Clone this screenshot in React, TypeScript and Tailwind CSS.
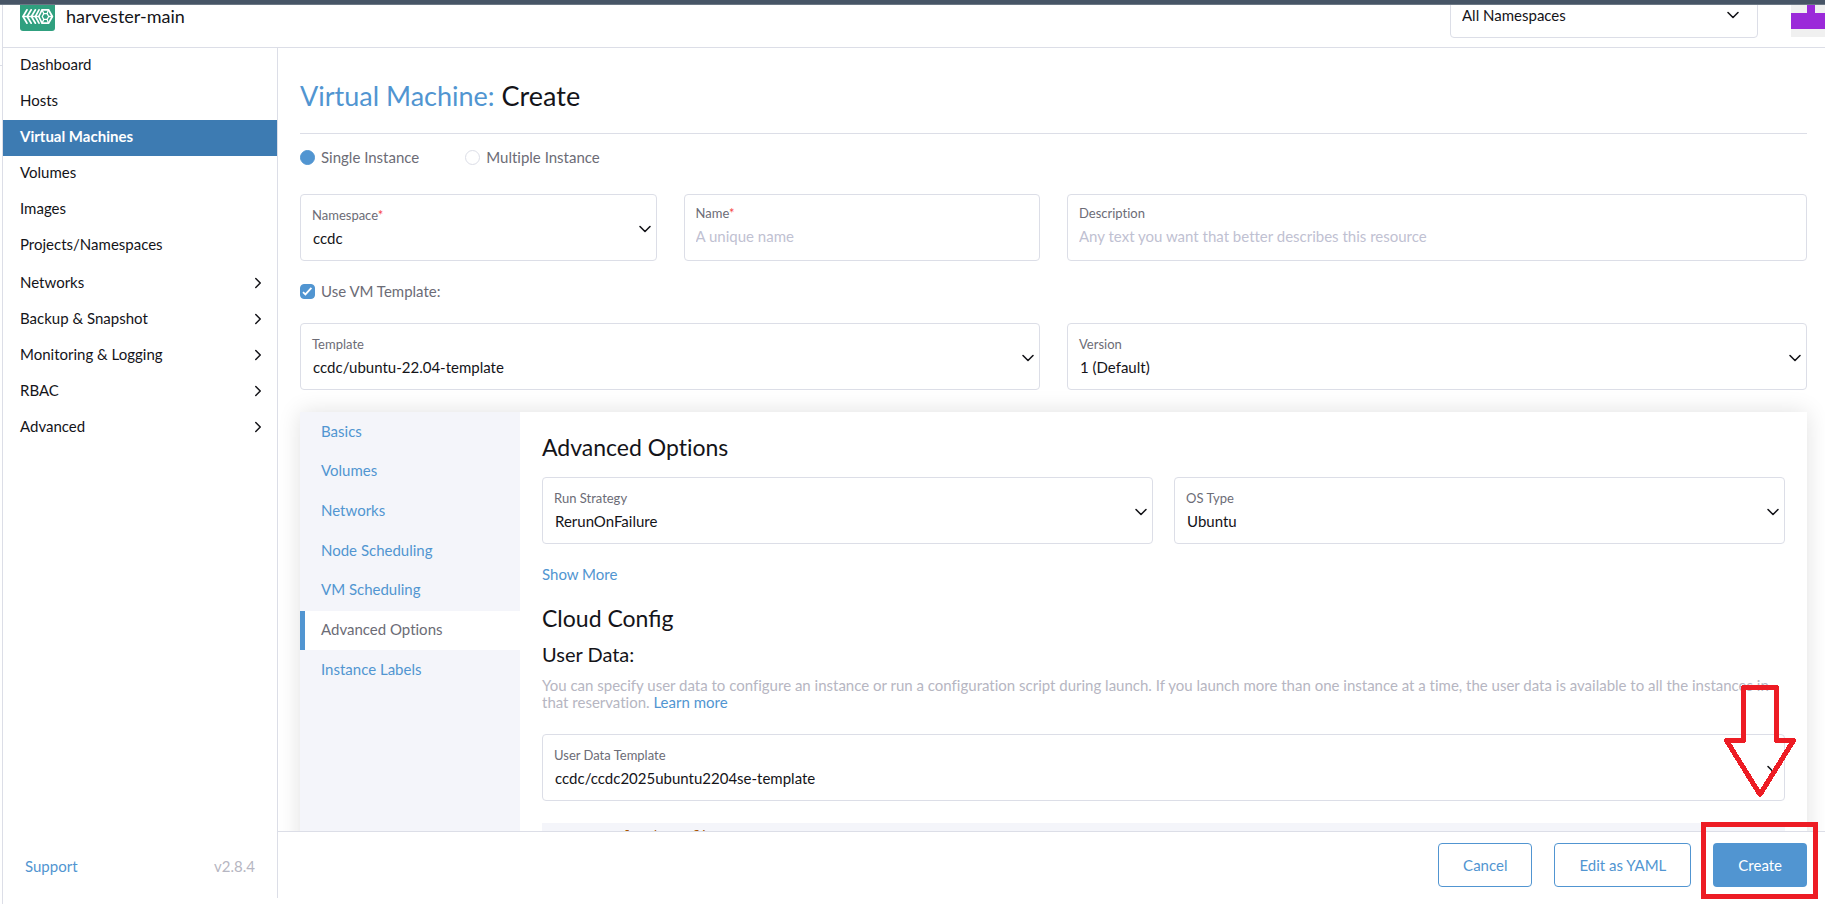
import { useId, type ReactNode } from "react";
import { ChevronDown, ChevronRight } from "lucide-react";
import clsx from "clsx";

const pages = ["Dashboard", "Hosts", "Virtual Machines", "Volumes", "Images", "Projects/Namespaces"];
const groups = ["Networks", "Backup & Snapshot", "Monitoring & Logging", "RBAC", "Advanced"];
const tabs = [
  "Basics",
  "Volumes",
  "Networks",
  "Node Scheduling",
  "VM Scheduling",
  "Advanced Options",
  "Instance Labels",
];

function Logo() {
  return (
    <svg viewBox="0 0 35 35" className="size-[35px]" aria-hidden="true">
      <rect width="35" height="35" rx="3" fill="#30a07f" />
      <g fill="none" stroke="#fff" strokeWidth="1.7" strokeLinejoin="round" strokeLinecap="round">
        <path d="M7 13.8 3 20.5l4 6.7M11.2 13.8l-4 6.7 4 6.7M15.4 13.8l-4 6.7 4 6.7M19 13.8l-3.6 6.7 3.6 6.7" />
        <path d="M22 13.8h6.5l3.9 6.7-3.9 6.7H22l-3.2-6.7z" />
        <path
          strokeWidth="1.3"
          d="M3 20.5h15.8M23.8 17.6h3.3l1.6 2.9-1.6 2.9h-3.3l-1.6-2.9zM22 13.8l1.8 3.8M28.5 13.8l-1.4 3.8M32.4 20.5h-3.7M28.5 27.2l-1.4-3.8M22 27.2l1.8-3.8"
        />
      </g>
    </svg>
  );
}

function Label({ id, text, required }: { id: string; text: string; required?: boolean }) {
  return (
    <label htmlFor={id} className="block text-[13px] leading-[18px] text-[#6c6c76]">
      {text}
      {required && <span className="text-[#f64747]">*</span>}
    </label>
  );
}

function SelectField({ label, value, required }: { label: string; value: string; required?: boolean }) {
  const id = useId();
  return (
    <div className="relative h-[67px] rounded-[4px] border border-[#dcdee7] px-[11px] pt-[11px]">
      <Label id={id} text={label} required={required} />
      <select
        id={id}
        defaultValue={value}
        className="mt-[2px] block h-6 w-full appearance-none bg-transparent pl-px text-[15px] outline-none"
      >
        <option>{value}</option>
      </select>
      <ChevronDown className="pointer-events-none absolute top-6 right-px size-5" strokeWidth={1.9} />
    </div>
  );
}

function TextField({
  label,
  placeholder,
  required,
  className,
}: {
  label: string;
  placeholder: string;
  required?: boolean;
  className?: string;
}) {
  const id = useId();
  return (
    <div className={clsx("h-[67px] rounded-[4px] border border-[#dcdee7] px-[11px] pt-[9px]", className)}>
      <Label id={id} text={label} required={required} />
      <input
        id={id}
        type="text"
        placeholder={placeholder}
        className="mt-[2px] block h-6 w-full bg-transparent text-[15px] outline-none placeholder:text-[#bfc1d2]"
      />
    </div>
  );
}

function Radio({ label, checked }: { label: string; checked?: boolean }) {
  return (
    <label className="flex h-5 items-center gap-[6px] text-[#6c6c76]">
      <input
        type="radio"
        name="instance"
        defaultChecked={checked}
        className="size-[15px] appearance-none rounded-full border border-[#dcdee7] checked:border-[#5195d1] checked:bg-[#5195d1]"
      />
      {label}
    </label>
  );
}

function OutlineButton({ children }: { children: ReactNode }) {
  return (
    <button type="button" className="h-11 rounded-[4px] border border-[#5195d1] px-6 text-[#5195d1]">
      {children}
    </button>
  );
}

function Sidebar() {
  return (
    <nav className="mb-[6px] flex w-[275px] shrink-0 flex-col border-r border-[#dcdee7]">
      <ul>
        {pages.map((p) => {
          const active = p === "Virtual Machines";
          return (
            <li key={p}>
              <a
                href="#"
                className={clsx(
                  "flex h-9 items-center pb-[3px] pl-[17px]",
                  active && "bg-[#3d7bb2] font-bold text-white",
                )}
              >
                {p}
              </a>
            </li>
          );
        })}
      </ul>
      <ul className="mt-px">
        {groups.map((g) => (
          <li key={g}>
            <button
              type="button"
              className="flex h-9 w-full items-center justify-between pr-[10px] pb-px pl-[17px]"
            >
              {g}
              <ChevronRight className="size-[18px]" strokeWidth={2} />
            </button>
          </li>
        ))}
      </ul>
      <div className="mt-auto mb-[22px] flex justify-between pr-[22px] pl-[22px] leading-5">
        <a href="#" className="text-[#5195d1]">
          Support
        </a>
        <span className="text-[#b6b6c2]">v2.8.4</span>
      </div>
    </nav>
  );
}

function AdvancedOptions() {
  return (
    <section className="min-w-0 flex-1 px-[22px] pt-[21px]">
      <h2 className="text-[23px] leading-7">Advanced Options</h2>
      <div className="mt-4 grid grid-cols-2 gap-[21px]">
        <SelectField label="Run Strategy" value="RerunOnFailure" />
        <SelectField label="OS Type" value="Ubuntu" />
      </div>
      <a href="#" className="mt-5 block w-fit leading-5 text-[#5195d1]">
        Show More
      </a>
      <h2 className="mt-5 text-[23px] leading-7 [font-variant-ligatures:normal]">Cloud Config</h2>
      <h3 className="mt-[10px] text-[20px] leading-6">User Data:</h3>
      <p className="mt-[11px] leading-[17px] text-[#b6b6c2]">
        You can specify user data to configure an instance or run a configuration script during launch. If you launch
        more than one instance at a time, the user data is available to all the instances in
        <br />
        that reservation.{" "}
        <a href="#" className="text-[#5195d1]">
          Learn more
        </a>
      </p>
      <div className="mt-[23px]">
        <SelectField label="User Data Template" value="ccdc/ccdc2025ubuntu2204se-template" />
      </div>
      <div className="mt-[22px] flex h-[200px] gap-2 bg-[#f4f5fa] pt-1 font-['Liberation_Mono',monospace] text-[14px] leading-5">
        <span className="w-[57px] text-right text-[#999999]">1</span>
        <code className="font-['Liberation_Mono',monospace] text-[#aa5500]">#cloud-config</code>
      </div>
    </section>
  );
}

export default function App() {
  return (
    <div className="flex h-screen flex-col overflow-hidden bg-white font-['Lato',sans-serif] text-[15px] text-[#141419] [font-variant-ligatures:no-common-ligatures]">
      <div className="z-10 h-[5px] shrink-0 border-b border-[#6c7885] bg-[#475566]" />
      <div className="flex min-h-0 flex-1">
        <div className="w-[3px] shrink-0 border-r border-[#dcdee7] pt-[60px]">
          <div className="h-px bg-[#dcdee7]" />
        </div>
        <div className="flex min-w-0 flex-1 flex-col">
          <header className="flex h-[43px] shrink-0 items-end border-b border-[#dcdee7] pl-[17px]">
            <div className="mb-4 flex items-end gap-[11px]">
              <Logo />
              <span className="mb-[3px] text-[18px] leading-6">harvester-main</span>
            </div>
            <div className="relative mb-[9px] ml-auto h-[46px] w-[308px] shrink-0 rounded-[4px] border border-[#dcdee7]">
              <select
                aria-label="Namespaces"
                className="h-full w-full appearance-none bg-transparent pl-[11px] text-[15px] outline-none"
              >
                <option>All Namespaces</option>
              </select>
              <ChevronDown className="pointer-events-none absolute top-3 right-[14px] size-5" strokeWidth={1.9} />
            </div>
            <svg
              viewBox="0 0 34 32"
              className="mb-[10px] ml-[33px] h-8 w-[34px] shrink-0"
              aria-hidden="true"
              shapeRendering="crispEdges"
            >
              <path d="M0 0h34v32H0z" fill="#f0f0f0" />
              <path d="M16 0h8v8h10v16H0V8h16z" fill="#9b29d9" />
            </svg>
          </header>
          <div className="flex min-h-0 flex-1">
            <Sidebar />
            <div className="flex min-w-0 flex-1 flex-col">
              <main className="min-h-0 flex-1 overflow-hidden pr-[18px] pl-[22px]">
                <h1 className="mt-[30px] border-b border-[#dcdee7] pb-[19px] text-[27px] leading-9">
                  <a href="#" className="text-[#5195d1]">
                    Virtual Machine:
                  </a>{" "}
                  Create
                </h1>
                <div className="mt-[13px] flex gap-[46px]">
                  <Radio label="Single Instance" checked />
                  <Radio label="Multiple Instance" />
                </div>
                <div className="mt-[27px] grid grid-cols-4 gap-[27px]">
                  <SelectField label="Namespace" value="ccdc" required />
                  <TextField label="Name" placeholder="A unique name" required />
                  <TextField
                    label="Description"
                    placeholder="Any text you want that better describes this resource"
                    className="col-span-2"
                  />
                </div>
                <label className="mt-5 flex h-5 w-fit items-center gap-[6px] text-[#6c6c76]">
                  <span className="relative size-[15px]">
                    <input
                      type="checkbox"
                      defaultChecked
                      className="block size-[15px] appearance-none rounded-[4px] border border-[#dcdee7] checked:border-[#5195d1] checked:bg-[#5195d1]"
                    />
                    <svg viewBox="0 0 15 15" className="pointer-events-none absolute inset-0" aria-hidden="true">
                      <path d="M3 8.2 5.4 10.4 11.4 3.8" fill="none" stroke="#fff" strokeWidth="1.8" />
                    </svg>
                  </span>
                  Use VM Template:
                </label>
                <div className="mt-[22px] grid grid-cols-2 gap-[27px]">
                  <SelectField label="Template" value="ccdc/ubuntu-22.04-template" />
                  <SelectField label="Version" value="1 (Default)" />
                </div>
                <div className="mt-[22px] flex bg-white shadow-[0_0_22px_rgba(0,0,20,0.12)]">
                  <div className="w-[220px] shrink-0 bg-[#f4f5fa]">
                    <ul className="flex h-[278px] flex-col">
                      {tabs.map((t) => {
                        const active = t === "Advanced Options";
                        return (
                          <li key={t} className="flex flex-1">
                            <a
                              href="#"
                              className={clsx(
                                "flex flex-1 items-center border-l-[5px] pb-[2px] pl-4",
                                active
                                  ? "border-[#5195d1] bg-white text-[#6c6c76]"
                                  : "border-transparent text-[#5195d1]",
                              )}
                            >
                              {t}
                            </a>
                          </li>
                        );
                      })}
                    </ul>
                  </div>
                  <AdvancedOptions />
                </div>
              </main>
              <footer className="flex h-[73px] shrink-0 justify-end gap-[22px] border-t border-[#dcdee7] pt-[11px] pr-[18px]">
                <OutlineButton>Cancel</OutlineButton>
                <OutlineButton>Edit as YAML</OutlineButton>
                <div className="relative h-11">
                  <button type="button" className="h-11 rounded-[4px] bg-[#5195d1] px-[25px] text-white">
                    Create
                  </button>
                  <div className="pointer-events-none absolute -top-[21px] -right-[11px] -bottom-3 -left-3 border-5 border-[#ed1c24]" />
                  <svg
                    viewBox="0 0 76 116"
                    className="pointer-events-none absolute right-[9px] bottom-[87px] h-[116px] w-[76px]"
                    aria-hidden="true"
                    shapeRendering="crispEdges"
                  >
                    <path
                      d="M21.5 3.5h33v53H71.5L38 110.5 4.5 56.5h17z"
                      fill="none"
                      stroke="#ed1c24"
                      strokeWidth="5"
                      strokeLinejoin="round"
                    />
                  </svg>
                </div>
              </footer>
            </div>
          </div>
        </div>
      </div>
    </div>
  );
}
